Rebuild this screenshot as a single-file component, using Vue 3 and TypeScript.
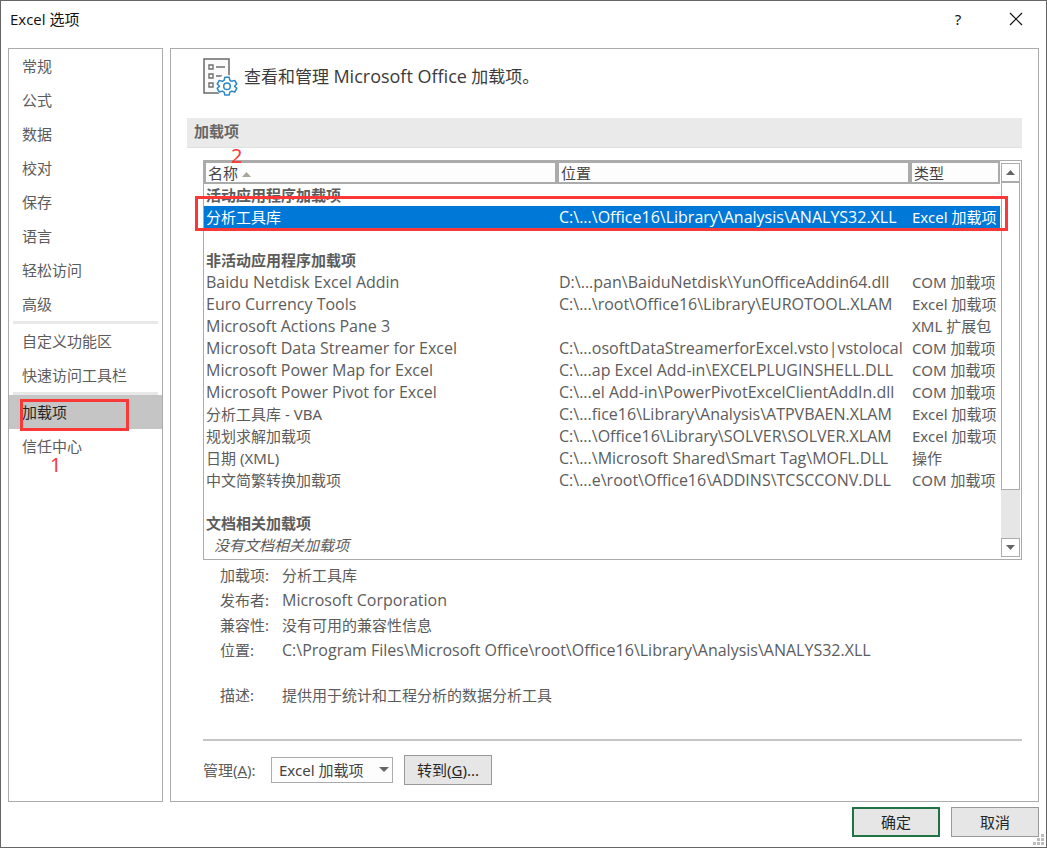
<script setup lang="ts">
import { ref } from 'vue'

interface AddIn {
  name: string
  location: string
  type: string
}

const navGroups: string[][] = [
  ['常规', '公式', '数据', '校对', '保存', '语言', '轻松访问', '高级'],
  ['自定义功能区', '快速访问工具栏'],
  ['加载项', '信任中心'],
]
const activeNav = ref('加载项')

const activeAddIns: AddIn[] = [
  { name: '分析工具库', location: 'C:\\...\\Office16\\Library\\Analysis\\ANALYS32.XLL', type: 'Excel 加载项' },
]

const inactiveAddIns: AddIn[] = [
  { name: 'Baidu Netdisk Excel Addin', location: 'D:\\...pan\\BaiduNetdisk\\YunOfficeAddin64.dll', type: 'COM 加载项' },
  { name: 'Euro Currency Tools', location: 'C:\\...\\root\\Office16\\Library\\EUROTOOL.XLAM', type: 'Excel 加载项' },
  { name: 'Microsoft Actions Pane 3', location: '', type: 'XML 扩展包' },
  { name: 'Microsoft Data Streamer for Excel', location: 'C:\\...osoftDataStreamerforExcel.vsto|vstolocal', type: 'COM 加载项' },
  { name: 'Microsoft Power Map for Excel', location: 'C:\\...ap Excel Add-in\\EXCELPLUGINSHELL.DLL', type: 'COM 加载项' },
  { name: 'Microsoft Power Pivot for Excel', location: 'C:\\...el Add-in\\PowerPivotExcelClientAddIn.dll', type: 'COM 加载项' },
  { name: '分析工具库 - VBA', location: 'C:\\...fice16\\Library\\Analysis\\ATPVBAEN.XLAM', type: 'Excel 加载项' },
  { name: '规划求解加载项', location: 'C:\\...\\Office16\\Library\\SOLVER\\SOLVER.XLAM', type: 'Excel 加载项' },
  { name: '日期 (XML)', location: 'C:\\...\\Microsoft Shared\\Smart Tag\\MOFL.DLL', type: '操作' },
  { name: '中文简繁转换加载项', location: 'C:\\...e\\root\\Office16\\ADDINS\\TCSCCONV.DLL', type: 'COM 加载项' },
]

const details: { label: string; value: string }[] = [
  { label: '加载项:', value: '分析工具库' },
  { label: '发布者:', value: 'Microsoft Corporation' },
  { label: '兼容性:', value: '没有可用的兼容性信息' },
  { label: '位置:', value: 'C:\\Program Files\\Microsoft Office\\root\\Office16\\Library\\Analysis\\ANALYS32.XLL' },
  { label: '描述:', value: '提供用于统计和工程分析的数据分析工具' },
]

const managed = ref('excel')

// Latin-only text is set one size larger than Chinese text
const isLatin = (text: string): boolean => /^[\x20-\x7e]+$/.test(text)
</script>

<template>
  <div class="dialog">
    <header class="titlebar">
      <span class="title">Excel 选项</span>
      <button class="title-btn help" type="button" aria-label="帮助">?</button>
      <button class="title-btn" type="button" aria-label="关闭">
        <svg width="14" height="14" viewBox="0 0 14 14">
          <path d="M1 1L13 13M13 1L1 13" stroke="#111" stroke-width="1.2" fill="none" />
        </svg>
      </button>
    </header>

    <div class="body">
      <nav class="sidebar">
        <ul v-for="(group, g) in navGroups" :key="g" class="nav-group">
          <li v-for="item in group" :key="item" class="nav-row">
            <button
              type="button"
              class="nav-item"
              :class="{ active: item === activeNav }"
              @click="activeNav = item"
            >{{ item }}</button>
            <span v-if="item === '加载项'" class="mark mark-nav"></span>
            <span v-if="item === '信任中心'" class="mark-num num-one">1</span>
          </li>
        </ul>
      </nav>

      <main class="panel">
        <div class="heading">
          <svg class="heading-icon" width="36" height="40" viewBox="0 0 36 40" fill="none">
            <path d="M1 2H26V36H1Z" fill="#fafafa" stroke="#6a6a6a" stroke-width="1.500" />
            <g stroke="#6f6f6f" stroke-width="1.400">
              <path d="M6 8h4v4H6zM6 17h4v4H6zM6 26h4v4H6z" />
              <path d="M13 10h9M13 19h6" />
            </g>
            <circle cx="24" cy="29" r="11" fill="#fff" />
            <path
              d="M21.900 20.200h4.200l.8 3.100 1.800 1 3-.9 2.100 3.600-2.300 2.200 2.300 2.200-2.100 3.600-3-.9-1.800 1-.8 3h-4.200l-.8-3-1.800-1-3 .9-2.100-3.600 2.300-2.200-2.300-2.200 2.100-3.600 3 .9 1.800-1z"
              fill="#fff" stroke="#2b88c8" stroke-width="1.500" stroke-linejoin="round"
            />
            <circle cx="24" cy="29.200" r="3.300" stroke="#2b88c8" stroke-width="1.500" />
          </svg>
          <h1>查看和管理 <span class="product">Microsoft Office</span> 加载项。</h1>
        </div>

        <div class="section">
          <h2>加载项</h2>
          <span class="mark-num num-two">2</span>
        </div>

        <div class="indent">
          <div class="listbox">
            <table>
              <colgroup>
                <col />
                <col />
                <col class="type-col" />
              </colgroup>
              <thead>
                <tr>
                  <th scope="col">
                    名称
                    <svg class="sort" width="9" height="5" viewBox="0 0 9 5"><path d="M0 5L4.500 0 9 5Z" fill="#aaa697" /></svg>
                  </th>
                  <th scope="col">位置</th>
                  <th scope="col">类型</th>
                </tr>
              </thead>
              <tbody>
                <tr class="group"><td colspan="3">活动应用程序加载项</td></tr>
                <tr v-for="a in activeAddIns" :key="a.name" class="selected">
                  <td :class="{ latin: isLatin(a.name) }">{{ a.name }}</td>
                  <td :class="{ latin: isLatin(a.location) }">{{ a.location }}</td>
                  <td>{{ a.type }}</td>
                </tr>
                <tr class="spacer"><td colspan="3"></td></tr>
                <tr class="group"><td colspan="3">非活动应用程序加载项</td></tr>
                <tr v-for="a in inactiveAddIns" :key="a.name">
                  <td :class="{ latin: isLatin(a.name) }">{{ a.name }}</td>
                  <td :class="{ latin: isLatin(a.location) }">{{ a.location }}</td>
                  <td>{{ a.type }}</td>
                </tr>
                <tr class="spacer"><td colspan="3"></td></tr>
                <tr class="group"><td colspan="3">文档相关加载项</td></tr>
                <tr class="empty"><td colspan="3">没有文档相关加载项</td></tr>
              </tbody>
            </table>
            <div class="scrollbar">
              <button type="button" class="arrow" aria-label="向上滚动">
                <svg width="9" height="5" viewBox="0 0 9 5"><path d="M0 5L4.500 0 9 5Z" fill="#666" /></svg>
              </button>
              <div class="track"><div class="thumb"></div></div>
              <button type="button" class="arrow" aria-label="向下滚动">
                <svg width="9" height="5" viewBox="0 0 9 5"><path d="M0 0L4.500 5 9 0Z" fill="#666" /></svg>
              </button>
            </div>
            <span class="mark mark-row"></span>
          </div>

          <dl class="details">
            <div v-for="d in details" :key="d.label" class="detail">
              <dt>{{ d.label }}</dt>
              <dd :class="{ latin: isLatin(d.value) }">{{ d.value }}</dd>
            </div>
          </dl>

          <div class="manage">
            <label for="manage">管理(<u>A</u>):</label>
            <div class="select">
              <select id="manage" v-model="managed">
                <option value="excel">Excel 加载项</option>
                <option value="com">COM 加载项</option>
              </select>
              <svg class="caret" width="10" height="5" viewBox="0 0 10 5"><path d="M0 0L5 5 10 0Z" fill="#666" /></svg>
            </div>
            <button type="button" class="btn">转到(<u>G</u>)...</button>
          </div>
        </div>
      </main>
    </div>

    <footer class="footer">
      <button type="button" class="btn primary">确定</button>
      <button type="button" class="btn">取消</button>
      <svg class="grip" width="11" height="11" viewBox="0 0 11 11">
        <path d="M8 0h3v3H8zM8 4h3v3H8zM8 8h3v3H8zM4 4h3v3H4zM4 8h3v3H4zM0 8h3v3H0z" fill="#bdbdbd" />
      </svg>
    </footer>
  </div>
</template>

<style>
body {
  margin: 0;
}
</style>

<style scoped>
.dialog {
  box-sizing: border-box;
  min-height: 100vh;
  display: flex;
  flex-direction: column;
  border: 1px solid #666;
  background: #fff;
  color: #5c5c5c;
  font-family: "Noto Sans", "Noto Sans CJK SC", sans-serif;
  font-size: 15px;
  line-height: 22px;
}

button,
select {
  box-sizing: border-box;
  margin: 0;
  padding: 0;
  border: 0;
  background: none;
  color: inherit;
  font: inherit;
}

h1,
h2,
ul,
dl,
dd {
  margin: 0;
  padding: 0;
}

.titlebar {
  display: flex;
  align-items: center;
  height: 36px;
  margin-bottom: 11px;
  padding-left: 9px;
  color: #111;
}

.title {
  flex: 1;
  font-family: "Open Sans", "Noto Sans CJK SC", sans-serif;
}

.title-btn {
  display: flex;
  align-items: center;
  justify-content: center;
  width: 58px;
  height: 36px;
}

.title-btn:last-child {
  margin-right: 1px;
}

.body {
  flex: 1;
  display: flex;
  gap: 7px;
  padding: 0 7px;
}

.sidebar {
  box-sizing: border-box;
  width: 155px;
  flex: none;
  border: 1px solid #ababab;
}

.nav-group {
  list-style: none;
}

.nav-group + .nav-group::before {
  content: "";
  display: block;
  height: 3px;
  margin: 0 4px;
  background: #e8e8e8;
}

.nav-row {
  position: relative;
}

.nav-item {
  display: block;
  width: 100%;
  height: 34px;
  padding-left: 13px;
  text-align: left;
}

.nav-item.active {
  background: #c5c5c5;
  color: #262626;
}

.mark {
  position: absolute;
  box-sizing: border-box;
  border: 3px solid #fb3838;
  pointer-events: none;
}

.mark-nav {
  left: 11px;
  top: 4px;
  width: 109px;
  height: 32px;
}

.mark-row {
  left: -9px;
  right: 13px;
  top: 35px;
  height: 35px;
}

.mark-num {
  position: absolute;
  z-index: 1;
  color: #fb3838;
  font-size: 20px;
  line-height: 20px;
}

.num-one {
  left: 41px;
  top: 26px;
}

.num-two {
  left: 44px;
  top: 28px;
}

.panel {
  flex: 1;
  min-width: 0;
  border: 1px solid #ababab;
  padding: 8px 16px 16px;
}

.heading {
  display: flex;
  align-items: flex-start;
  gap: 5px;
  margin-bottom: 21px;
  padding-left: 16px;
}

.heading h1 {
  color: #3b3b3b;
  font-size: 17px;
  font-weight: 400;
  line-height: 38px;
}

.product {
  font-family: "Open Sans", sans-serif;
  font-size: 18px;
}

.latin {
  font-family: "Open Sans", sans-serif;
  font-size: 16px;
}

.section {
  position: relative;
  box-sizing: border-box;
  height: 30px;
  margin-bottom: 12px;
  padding: 2px 7px;
  background: #eaeaea;
  border-bottom: 1px solid #e0e0e0;
}

.section h2 {
  font-size: 15px;
  font-weight: 700;
  color: #666;
}

.indent {
  padding-left: 16px;
}

.listbox {
  position: relative;
  display: flex;
  gap: 1px;
  border: 1px solid #ababab;
  padding-right: 1px;
}

table {
  flex: 1;
  width: 100%;
  min-width: 0;
  align-self: flex-start;
  margin-bottom: 3px;
  table-layout: fixed;
  border-collapse: separate;
  border-spacing: 0;
}

.type-col {
  width: 90px;
}

th {
  box-sizing: border-box;
  height: 23px;
  padding: 2px 2px 0;
  border: 2px solid #ababab;
  background: #fdfdfd;
  color: #444;
  font-weight: 400;
  line-height: 17px;
  text-align: left;
}

.sort {
  vertical-align: middle;
}

td {
  height: 22px;
  padding: 0 2px;
  line-height: 22px;
  white-space: nowrap;
}

.spacer td {
  height: 21px;
}

.group td {
  font-weight: 700;
}

.selected td {
  background: #0078d7;
  color: #fff;
}

.empty td {
  padding-left: 10px;
  font-style: italic;
}

.scrollbar {
  display: flex;
  flex-direction: column;
  flex: none;
  width: 19px;
  padding: 2px 0;
}

.arrow {
  display: flex;
  align-items: center;
  justify-content: center;
  height: 19px;
  border: 1px solid #ababab;
}

.track {
  flex: 1;
  background: #e6e6e6;
}

.thumb {
  box-sizing: border-box;
  height: 86.5%;
  border: 1px solid #ababab;
  background: #fff;
}

.details {
  padding: 3px 0 31px 17px;
  border-bottom: 2px solid #c6c6c6;
}

.detail {
  display: flex;
  line-height: 25px;
}

.detail:last-child {
  margin-top: 20px;
}

.detail dt {
  width: 62px;
}

.manage {
  display: flex;
  align-items: center;
  margin-top: 14px;
}

.manage label {
  width: 68px;
}

.select {
  position: relative;
  width: 122px;
  margin-right: 11px;
}

.select select {
  display: block;
  width: 100%;
  height: 26px;
  padding-left: 7px;
  appearance: none;
  border: 1px solid #ababab;
  background: #fdfdfd;
  color: #444;
}

.caret {
  position: absolute;
  right: 4px;
  top: 10px;
  pointer-events: none;
}

.btn {
  width: 88px;
  height: 30px;
  border: 1px solid #999;
  background: #e6e6e6;
  color: #262626;
}

.btn.primary {
  border: 2px solid #217346;
}

.footer {
  position: relative;
  display: flex;
  justify-content: flex-end;
  gap: 11px;
  padding: 5px 7px 10px;
}

.grip {
  position: absolute;
  right: 2px;
  bottom: 2px;
}
</style>
